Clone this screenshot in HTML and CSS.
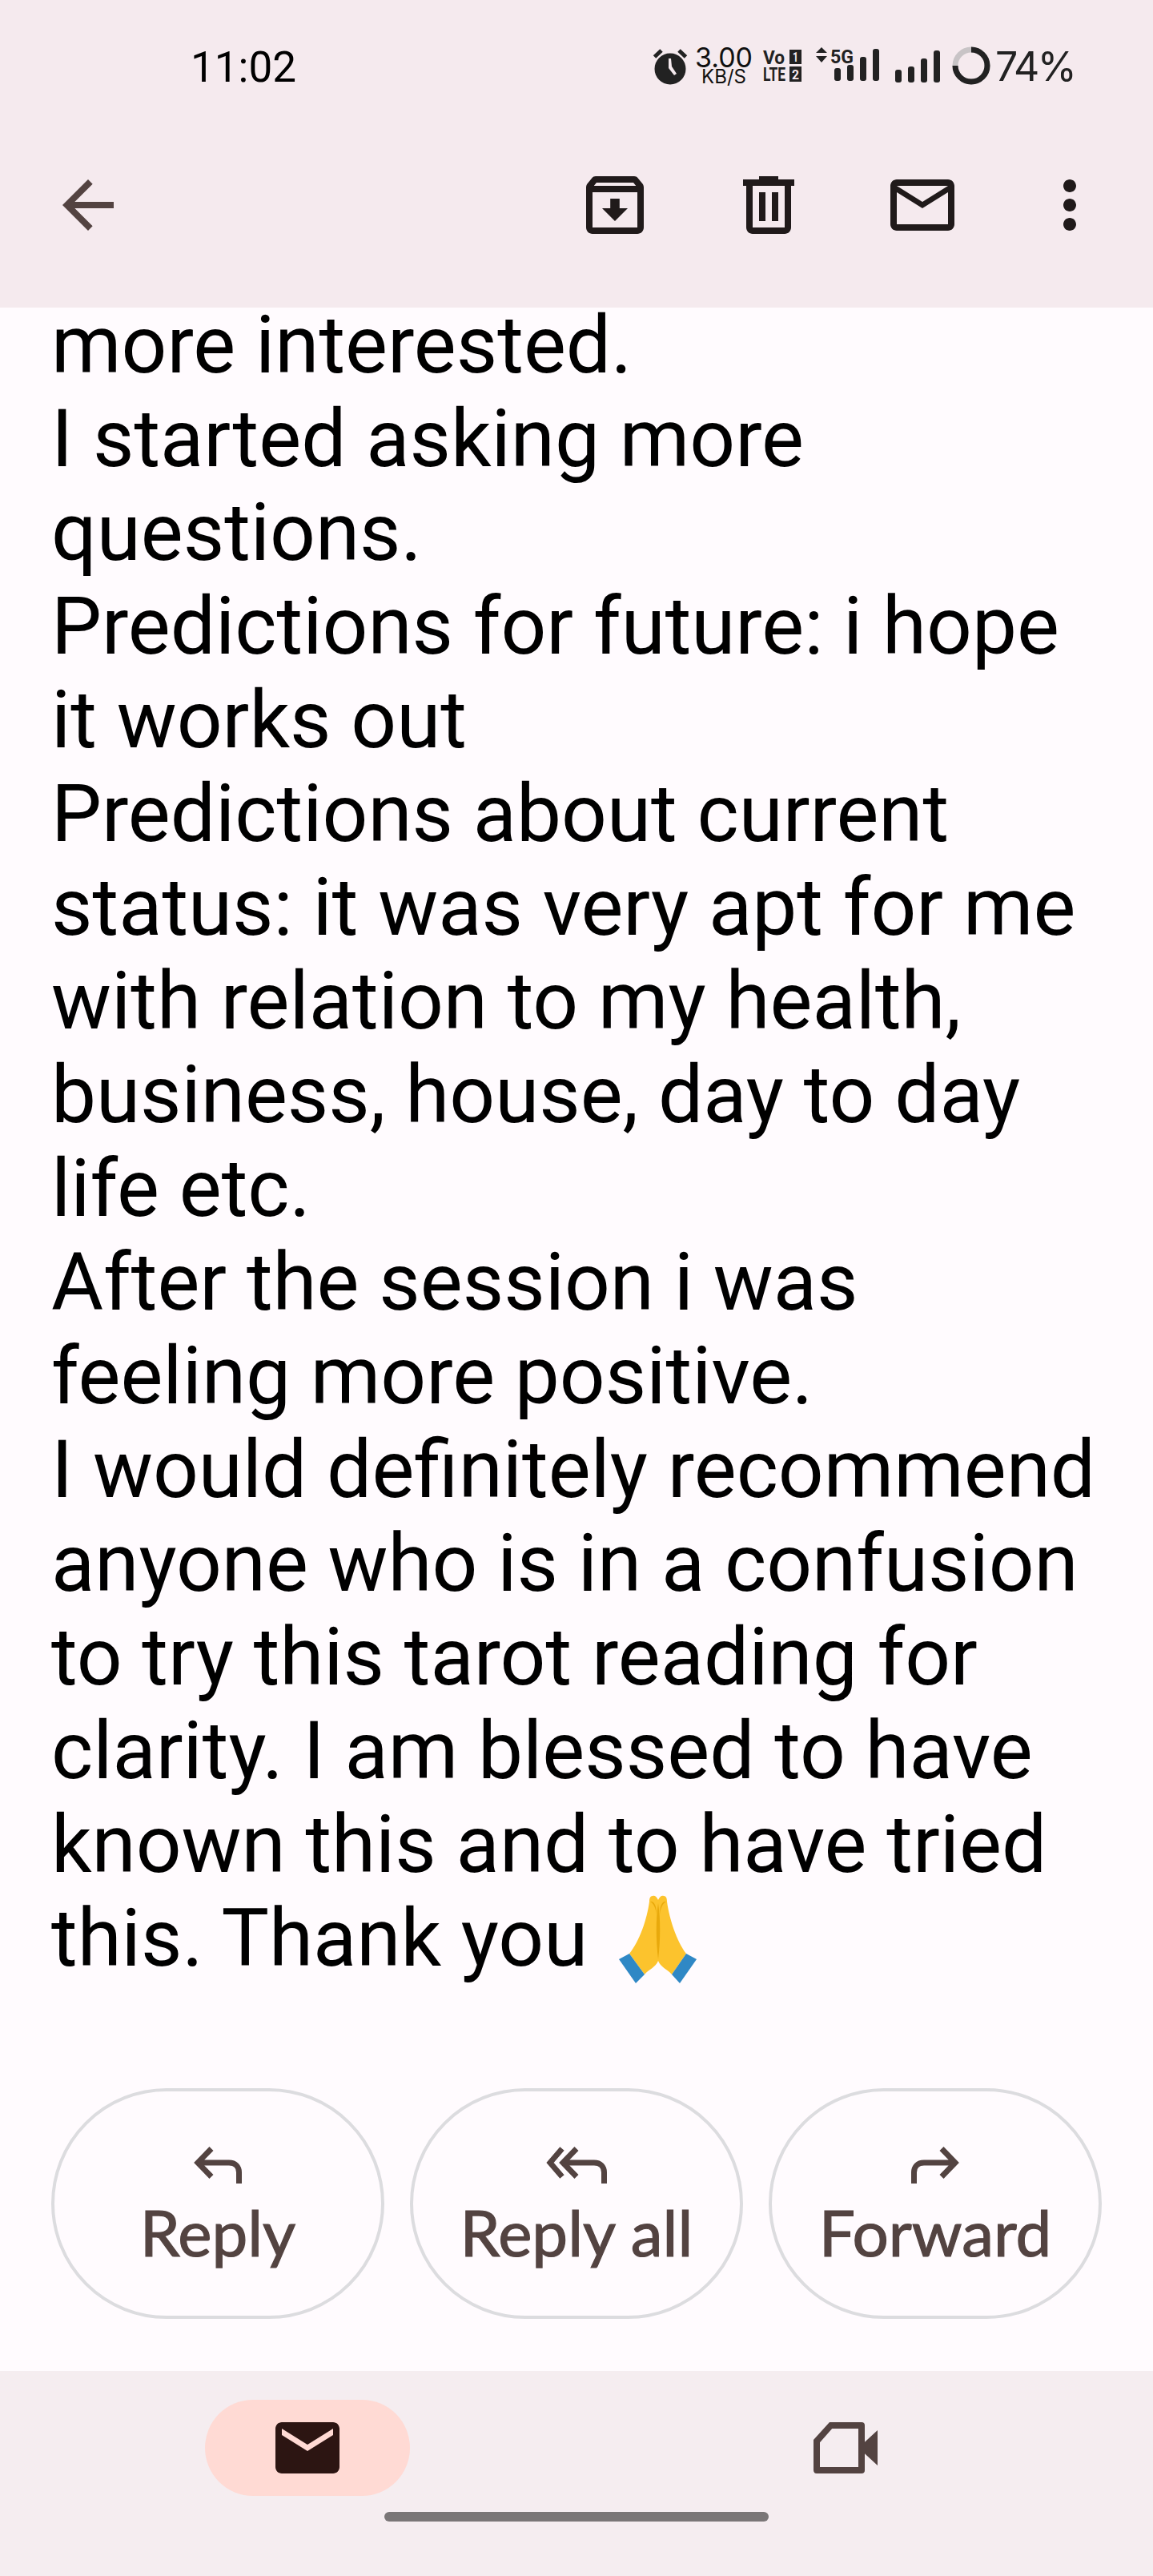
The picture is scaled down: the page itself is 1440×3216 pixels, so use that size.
FILE: index.html
```html
<!DOCTYPE html>
<html lang="en">
<head>
<meta charset="utf-8">
<title>Message</title>
<link rel="stylesheet" href="styles.css">
</head>
<body>
<div class="app">
  <header class="topbar">
    <div class="status">
      <span class="time">11:02</span>
      <div class="status-icons">
        <svg class="ic-alarm" viewBox="0 0 42 45" width="42" height="45"><path class="dark-stroke" d="M1.5 11 10 3M40.5 11 32 3" /><circle class="dark" cx="21" cy="26" r="19.5"/><path class="cut" d="M19 13l3 0 1 10 6 9-3 2-7-9z"/></svg>
        <div class="speed"><span class="speed-val">3.00</span><span class="speed-unit">KB/S</span></div>
        <svg class="ic-volte" viewBox="0 0 48 40" width="48" height="40">
          <text class="tiny" x="0" y="18" textLength="27" lengthAdjust="spacingAndGlyphs">Vo</text>
          <rect class="dark" x="33" y="0" width="15" height="18"/><text class="tiny-w" x="37" y="15" textLength="7" lengthAdjust="spacingAndGlyphs">1</text>
          <text class="tiny" x="0" y="39" textLength="28" lengthAdjust="spacingAndGlyphs">LTE</text>
          <rect class="dark" x="33" y="21" width="15" height="19"/><text class="tiny-w" x="36" y="37" textLength="9" lengthAdjust="spacingAndGlyphs">2</text>
        </svg>
        <svg class="ic-sig1" viewBox="0 0 79 44" width="79" height="44">
          <path class="dark" d="M7 0l7 7H0zM0 11h14l-7 8z"/>
          <text class="tiny" x="18" y="19.500" textLength="29" lengthAdjust="spacingAndGlyphs">5G</text>
          <rect class="dark" x="23" y="26" width="8" height="16" rx="3"/><rect class="dark" x="39" y="22" width="8" height="20" rx="3"/><rect class="dark" x="55" y="12" width="8" height="30" rx="3"/><rect class="dark" x="71" y="2" width="8" height="40" rx="3"/>
        </svg>
        <svg class="ic-sig2" viewBox="0 0 56 40" width="56" height="40">
          <rect class="dark" x="0" y="24" width="8" height="16" rx="3"/><rect class="dark" x="16" y="20" width="8" height="20" rx="3"/><rect class="dark" x="32" y="10" width="8" height="30" rx="3"/><rect class="dark" x="48" y="0" width="8" height="40" rx="3"/>
        </svg>
        <svg class="ic-ring" viewBox="0 0 48 48" width="48" height="48">
          <circle class="ring-bg" cx="24" cy="24" r="20"/>
          <path class="ring-fg" d="M24 4A20 20 0 1 1 4 24"/>
        </svg>
        <span class="battery">74%</span>
      </div>
    </div>
    <div class="toolbar">
      <svg class="icon ic-back" viewBox="0 0 24 24"><path class="brown" d="M20 11H7.830l5.590-5.590L12 4l-8 8 8 8 1.410-1.410L7.830 13H20v-2z"/></svg>
      <div class="actions">
        <svg class="icon" viewBox="0 0 24 24"><path class="ink" d="M20.54 5.230l-1.390-1.680C18.880 3.210 18.470 3 18 3H6c-.47 0-.88.21-1.160.55L3.460 5.230C3.170 5.570 3 6.020 3 6.500V19c0 1.100.9 2 2 2h14c1.100 0 2-.9 2-2V6.500c0-.48-.17-.93-.46-1.270zM6.240 5h11.520l.81.97H5.440l.8-.97zM5 19V8h14v11H5zm8.450-9h-2.900v3H8l4 4 4-4h-2.550z"/></svg>
        <svg class="icon" viewBox="0 0 24 24"><path class="ink" d="M15 4V3H9v1H4v2h1v13c0 1.100.9 2 2 2h10c1.100 0 2-.9 2-2V6h1V4h-5zm2 15H7V6h10v13zM9 8h2v9H9zm4 0h2v9h-2z"/></svg>
        <svg class="icon" viewBox="0 0 24 24"><path class="ink" d="M20 4H4c-1.100 0-2 .9-2 2v12c0 1.100.9 2 2 2h16c1.100 0 2-.9 2-2V6c0-1.100-.9-2-2-2zm0 14H4V8l8 5 8-5v10zm-8-7L4 6h16l-8 5z"/></svg>
        <svg class="icon ic-more" viewBox="0 0 24 24"><path class="ink" d="M12 8c1.100 0 2-.9 2-2s-.9-2-2-2-2 .9-2 2 .9 2 2 2zm0 2c-1.100 0-2 .9-2 2s.9 2 2 2 2-.9 2-2-.9-2-2-2zm0 6c-1.100 0-2 .9-2 2s.9 2 2 2 2-.9 2-2-.9-2-2-2z"/></svg>
      </div>
    </div>
  </header>

  <main class="content">
    <p class="message">more interested.<br>
I started asking more<br>
questions.<br>
Predictions for future: i hope<br>
it works out<br>
Predictions about current<br>
status: it was very apt for me<br>
with relation to my health,<br>
business, house, day to day<br>
life etc.<br>
After the session i was<br>
feeling more positive.<br>
I would definitely recommend<br>
anyone who is in a confusion<br>
to try this tarot reading for<br>
clarity. I am blessed to have<br>
known this and to have tried<br>
this. Thank you <svg class="pray" viewBox="0 0 98 110" role="img" aria-label="folded hands"><path class="skin" d="M49 6C47 1 44 0 42 1C39 1 38 4 38 8C35 30 26 57 13 73L32 99C38 92 46 90 49 82Z"/><path class="skin" d="M49 6C51 1 54 0 56 1C59 1 60 4 60 8C63 30 72 57 84 73L66 99C60 92 52 90 49 82Z"/><path class="skin-d" d="M49 10C46 30 46 55 49 80C52 55 52 30 49 10z"/><path class="skin-d" d="M39 8C44 7 47 13 47 24C46 16 43 10 39 8zM59 8C54 7 51 13 51 24C52 16 55 10 59 8z"/><path class="sleeve" d="M0 80 13 73 32 99 21 110z"/><path class="sleeve" d="M97 80 84 73 66 99 76 110z"/></svg></p>

    <div class="reply-row">
      <a class="chip">
        <svg class="chip-ic" viewBox="0 0 60 46" width="60" height="46"><path class="line" d="M22 2.500 5 20 22 37.500M5 20H44C52 20 56.500 25 56.500 32V46"/></svg>
        <span class="chip-label">Reply</span>
      </a>
      <a class="chip">
        <svg class="chip-ic" viewBox="0 0 76 46" width="76" height="46"><path class="line" d="M20 2.500 5 20 20 37.500M38 2.500 21 20 38 37.500M21 20H60C68 20 72.500 25 72.500 32V46"/></svg>
        <span class="chip-label">Reply all</span>
      </a>
      <a class="chip">
        <svg class="chip-ic" viewBox="0 0 60 46" width="60" height="46"><path class="line" d="M38 2.500 55 20 38 37.500M55 20H16C8 20 3.500 25 3.500 32V46"/></svg>
        <span class="chip-label">Forward</span>
      </a>
    </div>
  </main>

  <nav class="bottom">
    <div class="tabs">
      <div class="tab-pill">
        <svg class="icon" viewBox="0 0 24 24"><path class="deep" d="M20 4H4c-1.100 0-2 .89-2 2v12c0 1.100.9 2 2 2h16c1.100 0 2-.9 2-2V6c0-1.100-.9-2-2-2zm0 4l-8 5-8-5V6l8 5 8-5v2z"/></svg>
      </div>
      <div class="tab-plain">
        <svg class="icon" viewBox="0 0 24 24"><path class="brown" d="M7 4h10a1 1 0 0 1 1 1v14a1 1 0 0 1-1 1H3a1 1 0 0 1-1-1V9.500zM7.800 6 4 10.300V18h12V6zM22 6.500v11L18 13.800v-3.600z"/></svg>
      </div>
    </div>
    <div class="home-bar"></div>
  </nav>
</div>
</body>
</html>
```
FILE: styles.css
```css
* { box-sizing: border-box; }
html, body { margin: 0; padding: 0; }
body { background: #fffbfe; font-family: Roboto, "Noto Sans", sans-serif; }
.app { width: 1440px; height: 3216px; display: flex; flex-direction: column; overflow: hidden; }

.topbar { height: 384px; flex: none; background: #f5eaee; position: relative; z-index: 1; }
.status { height: 164px; display: flex; align-items: center; padding-left: 238px; }
.time { font-size: 53px; line-height: 1; color: #000; padding-top: 4px; }
.status-icons { margin-left: auto; padding-right: 100px; display: flex; align-items: center; height: 60px; }
svg { overflow: visible; }
.dark { fill: #222; }
.dark-stroke { fill: none; stroke: #222; stroke-width: 5; }
.cut { fill: #f5eaee; }
.ic-alarm { flex: none; }
.speed { margin-left: 12px; width: 68px; flex: none; display: flex; flex-direction: column; align-items: center; font-family: Inter, sans-serif; color: #111; line-height: 1; }
.speed-val { font-size: 34px; height: 28px; line-height: 28px; }
.speed-unit { font-size: 24px; height: 20px; line-height: 20px; }
.ic-volte { margin-left: 15px; flex: none; }
.tiny { font-family: Roboto, sans-serif; font-weight: 700; font-size: 24px; fill: #222; }
.tiny-w { font-family: Roboto, sans-serif; font-weight: 700; font-size: 16px; fill: #f5eaee; }
.ic-sig1 { margin-left: 18px; margin-top: -2px; flex: none; }
.ic-sig2 { margin-left: 20px; margin-top: 2px; flex: none; }
.ic-ring { margin-left: 15px; flex: none; }
.ring-bg { fill: none; stroke: #c8c4c6; stroke-width: 7; }
.ring-fg { fill: none; stroke: #222; stroke-width: 7; }
.battery { margin-left: 6px; width: 97px; flex: none; font-family: Inter, sans-serif; font-size: 50px; letter-spacing: -2.500px; line-height: 1; color: #222; white-space: nowrap; padding-top: 2px; }

.toolbar { margin-top: 44px; height: 96px; display: flex; padding-left: 62px; padding-right: 56px; }
.icon { width: 96px; height: 96px; flex: none; display: block; }
.actions { margin-left: auto; display: flex; gap: 96px; }
.ic-more { margin-left: -8px; }
.ink { fill: #201a1a; }
.brown { fill: #534341; }
.deep { fill: #2c1512; }

.content { flex: 1; min-height: 0; padding-left: 64px; overflow: hidden; }
.message { margin: -12px 0 0; font-size: 99.800px; line-height: 117px; color: #000; white-space: nowrap; height: 2106px; }
.pray { width: 98px; height: 110px; vertical-align: -22px; margin-left: 14px; }
.skin { fill: #fcc32d; }
.skin-d { fill: #e8a90c; }
.sleeve { fill: #2f88c5; }

.reply-row { display: flex; gap: 32px; margin-top: 129px; }
.chip { width: 416px; height: 288px; flex: none; border: 4px solid #dcdcdf; border-radius: 144px; display: flex; flex-direction: column; align-items: center; color: #534341; font-family: Lato, sans-serif; font-size: 80px; line-height: 96px; padding-top: 69px; }
.chip-ic { flex: none; }
.chip-label { margin-top: 12px; -webkit-text-stroke: 1.200px #534341; }
.line { fill: none; stroke: #534341; stroke-width: 7; }

.bottom { height: 256px; flex: none; background: #f5edf0; display: flex; flex-direction: column; align-items: center; }
.tabs { width: 100%; display: flex; height: 120px; margin-top: 36px; padding-left: 256px; }
.tab-pill { width: 256px; height: 120px; border-radius: 60px; background: #ffdad4; display: flex; align-items: center; justify-content: center; }
.tab-plain { margin-left: 496px; height: 120px; display: flex; align-items: center; }
.home-bar { width: 480px; height: 12px; border-radius: 6px; background: #7a7677; margin-top: 20px; }
```
